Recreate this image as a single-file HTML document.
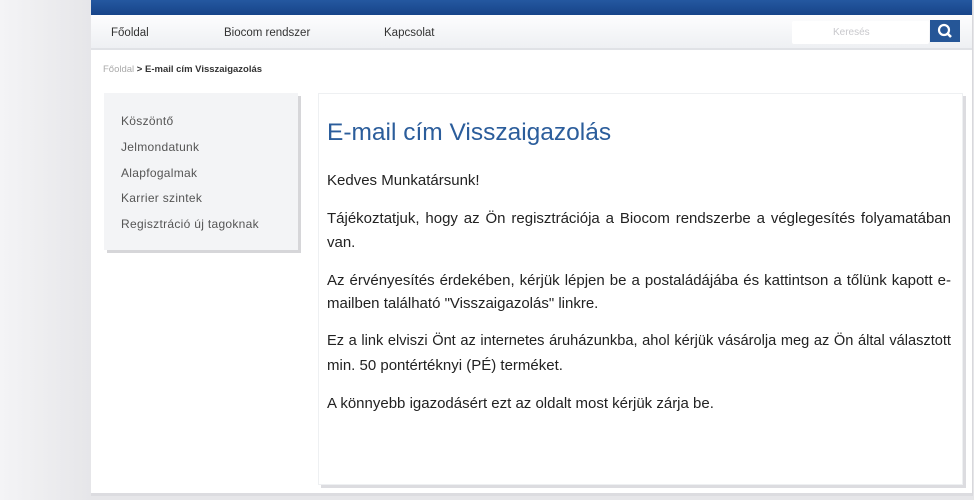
<!DOCTYPE html>
<html><head><meta charset="utf-8"><style>
*{margin:0;padding:0;box-sizing:border-box}
body{width:974px;height:500px;overflow:hidden;background:linear-gradient(90deg,#f4f4f6,#e6e6e9 91px);font-family:"Liberation Sans",sans-serif;position:relative}
.page{position:absolute;left:91px;top:0;width:882px;height:496px;background:#fff;border-right:1px solid #d8d8dc;border-bottom:3px solid #dcdce0}
.top{height:15px;background:linear-gradient(#2458a0,#174489)}
.nav{height:35px;background:linear-gradient(#fdfdfe,#eef0f3);border-bottom:2px solid #e0e2e6;position:relative;font-size:11.5px;color:#333}
.nav span{position:absolute;top:12px}
.search{position:absolute;left:701px;top:6px;width:137px;height:23px;background:#fff;border-radius:2px}
.search i{position:absolute;left:41px;top:6px;font-style:normal;font-size:10px;color:#c8c8cc}
.sbtn{position:absolute;left:839px;top:5px;width:30px;height:22px;background:#255697}
.bc{position:absolute;left:12px;top:64px;font-size:9.5px;font-weight:bold;color:#333}
.bc b{color:#aaa;font-weight:normal}
.side{position:absolute;left:13px;top:93px;width:194px;height:157px;background:#f3f4f6;box-shadow:3px 3px 0 #d6d6d9;font-size:12px;letter-spacing:0.3px;color:#555;padding:21px 0 0 17px}
.side div{height:25.8px}
.main{position:absolute;left:227px;top:93px;width:645px;height:392px;background:#fff;border:1px solid #eef0f2;box-shadow:3px 3px 0 #dcdce0;padding:25px 11px 0 8px}
h1{font-weight:normal;font-size:24.5px;color:#2b5d9b;margin-bottom:22px}
p{font-size:15px;color:#222;line-height:23.5px;margin-bottom:14.5px}
p .j{display:block;text-align:justify;text-align-last:justify;white-space:nowrap}
p .j{white-space:normal}
</style></head><body>
<div class="page">
<div class="top"></div>
<div class="nav"><span style="left:20px">Főoldal</span><span style="left:133px">Biocom rendszer</span><span style="left:293px">Kapcsolat</span>
<div class="search"><i>Keresés</i></div>
<div class="sbtn"><svg width="30" height="22"><circle cx="14" cy="10" r="5" fill="none" stroke="#fff" stroke-width="2.2"/><line x1="17.5" y1="13.5" x2="21" y2="17" stroke="#fff" stroke-width="2.6"/></svg></div></div>
<div class="bc"><b>Főoldal</b> &gt; E-mail cím Visszaigazolás</div>
<div class="side"><div>Köszöntő</div><div>Jelmondatunk</div><div>Alapfogalmak</div><div>Karrier szintek</div><div>Regisztráció új tagoknak</div></div>
<div class="main">
<h1>E-mail cím Visszaigazolás</h1>
<p>Kedves Munkatársunk!</p>
<p><span class="j">Tájékoztatjuk, hogy az Ön regisztrációja a Biocom rendszerbe a véglegesítés folyamatában</span>van.</p>
<p><span class="j">Az érvényesítés érdekében, kérjük lépjen be a postaládájába és kattintson a tőlünk kapott e-</span>mailben található "Visszaigazolás" linkre.</p>
<p><span class="j" style="font-size:14.6px">Ez a link elviszi Önt az internetes áruházunkba, ahol kérjük vásárolja meg az Ön által választott</span>min. 50 pontértéknyi (PÉ) terméket.</p>
<p>A könnyebb igazodásért ezt az oldalt most kérjük zárja be.</p>
</div>
</div>
</body></html>
